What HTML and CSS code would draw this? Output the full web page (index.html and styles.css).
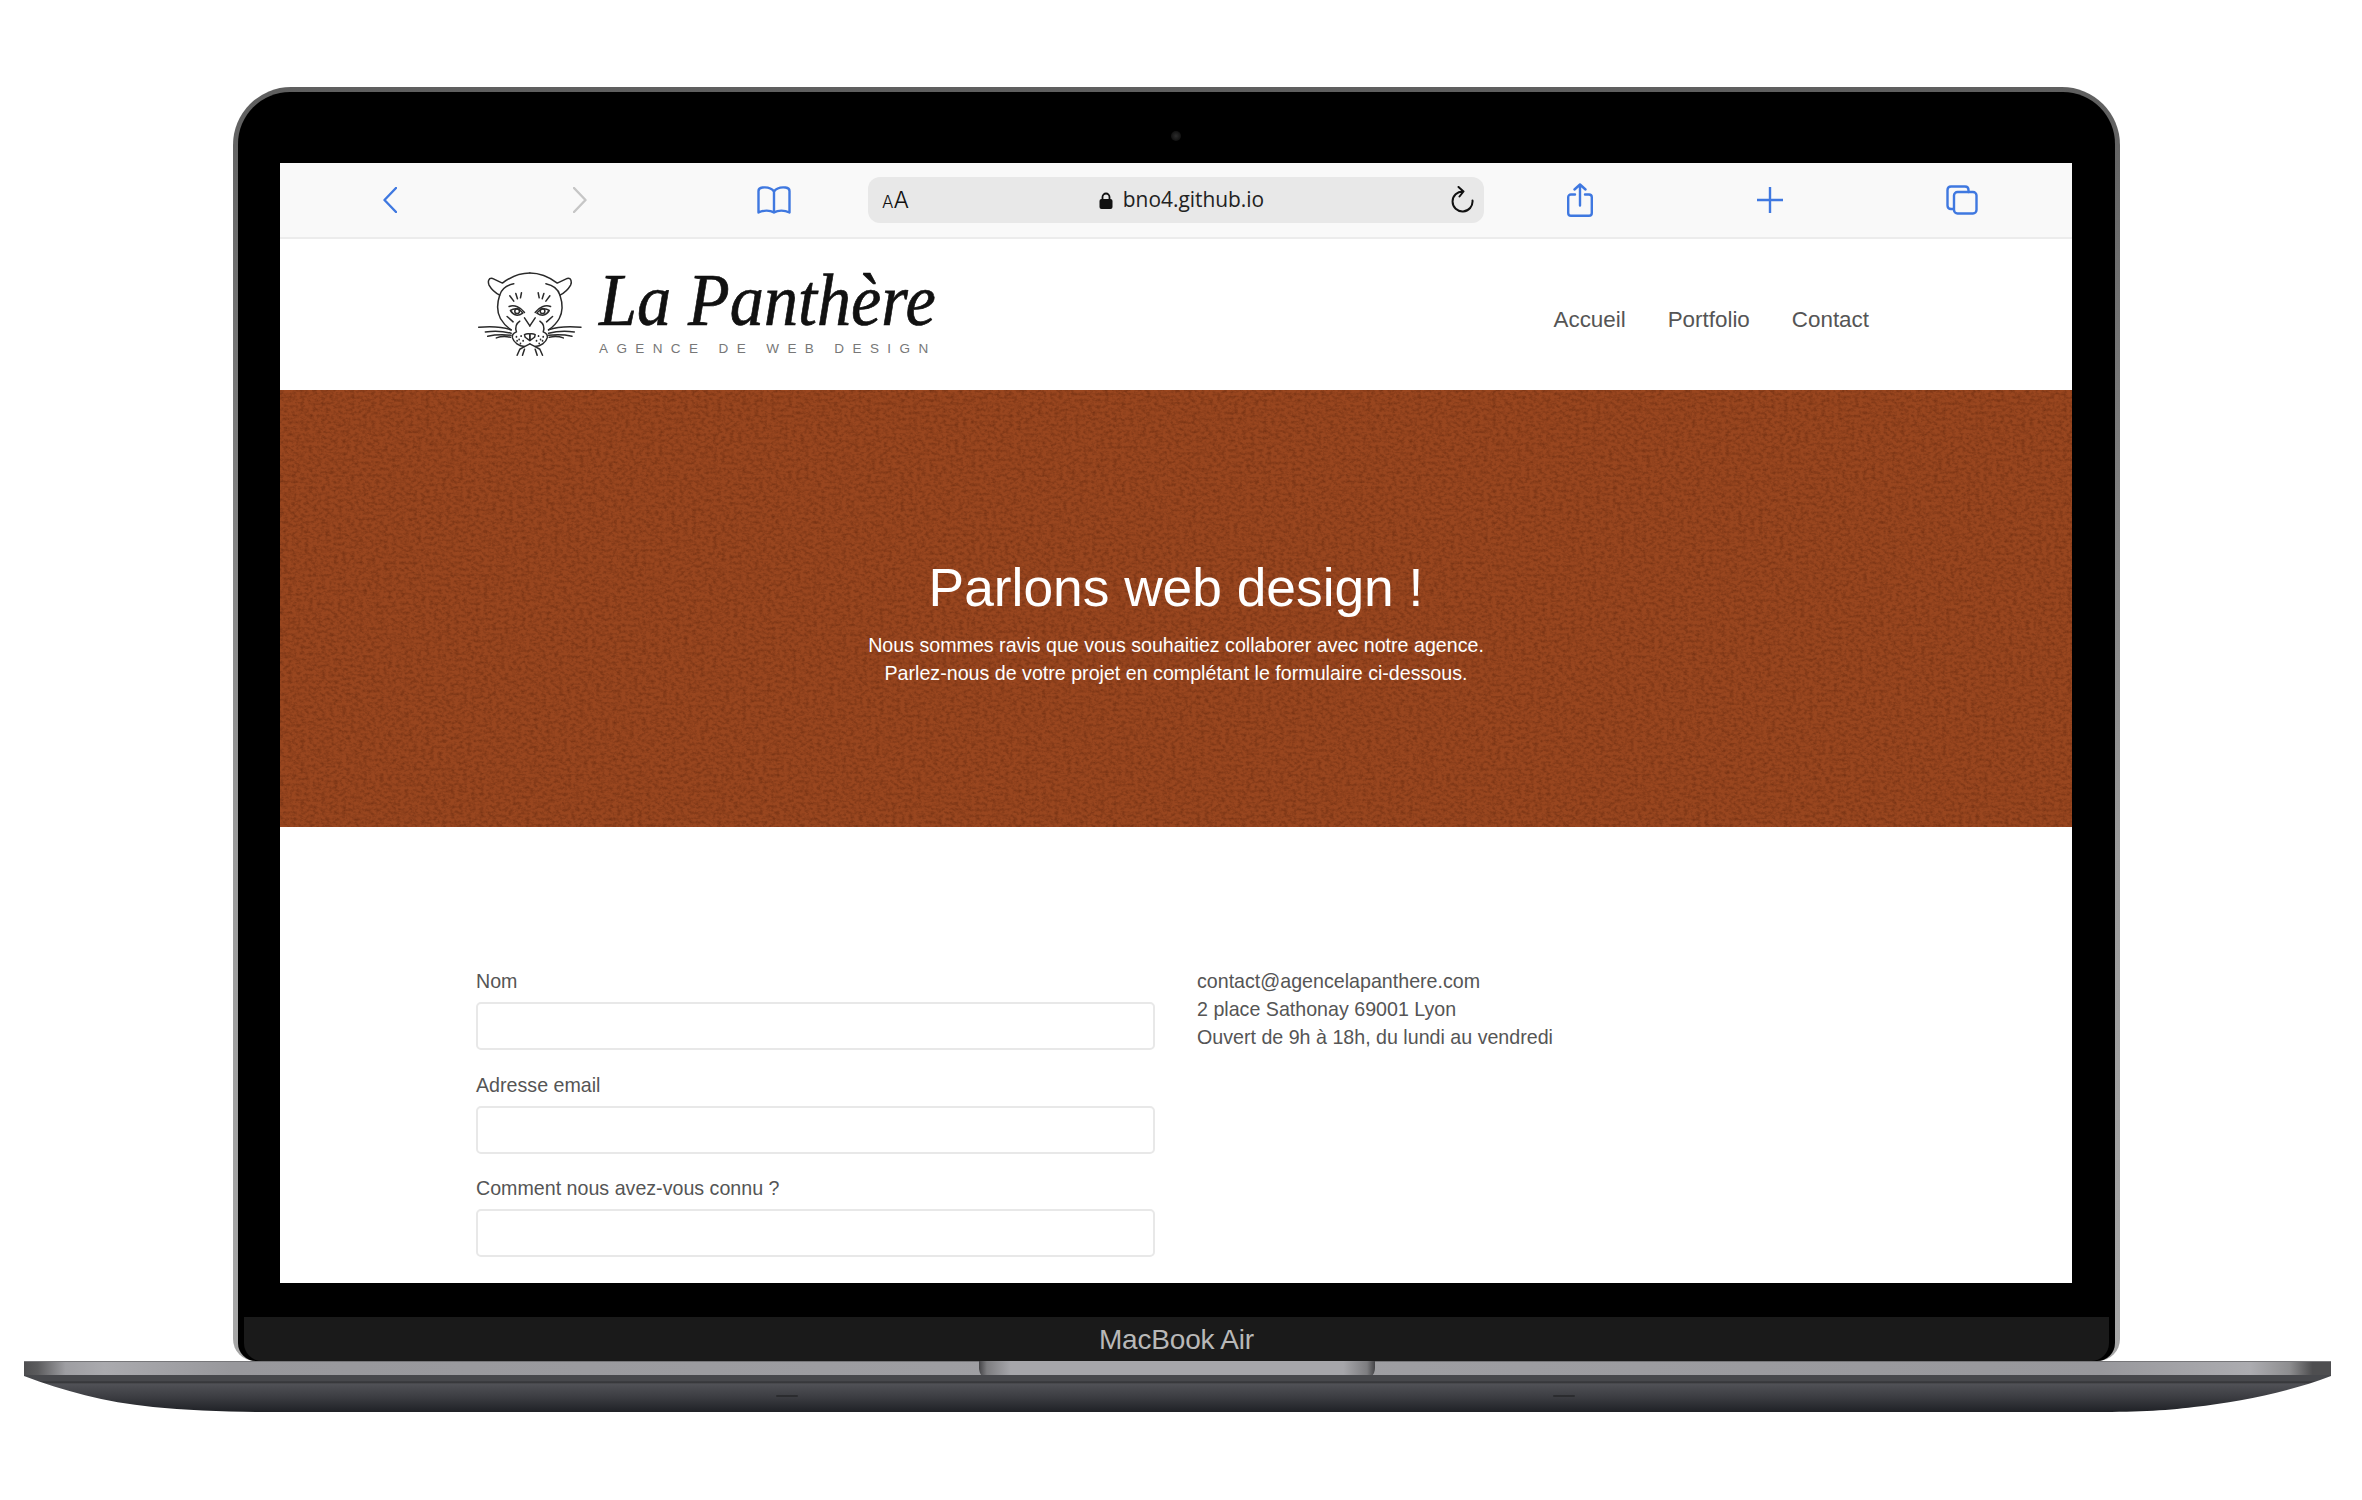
FILE: index.html
```html
<!DOCTYPE html>
<html lang="fr">
<head>
<meta charset="utf-8">
<title>La Panthère</title>
<link rel="stylesheet" href="styles.css">
</head>
<body>
<div class="stage">
  <div class="lid">
    <div class="bezel">
      <span class="camera"></span>
      <div class="screen">
        <div class="toolbar">
          <span class="tool"><svg width="14" height="26" viewBox="0 0 14 26"><path class="ic" d="M13 1 1.5 13 13 25"/></svg></span>
          <span class="tool"><svg width="14" height="26" viewBox="0 0 14 26"><path class="ic ic-off" d="M1 1 12.5 13 1 25"/></svg></span>
          <span class="tool tool-book"><svg width="34" height="28" viewBox="0 0 34 28"><path class="ic" d="M17 5.500C14.500 2 10 1 5.500 1.500 3 1.800 1.500 2.800 1.500 5V26.500C6.500 24 13 24 17 26.500 21 24 27.500 24 32.500 26.500V5C32.500 2.800 31 1.800 28.500 1.500 24 1 19.500 2 17 5.500ZM17 5.500V26.500"/></svg></span>
          <div class="urlbar">
            <span class="aa"><small>A</small>A</span>
            <span class="url">
              <svg width="14" height="17" viewBox="0 0 14 17"><path class="lock-ring" d="M3.500 8V5a3.500 3.500 0 0 1 7 0V8"/><rect x="0.500" y="7" width="13" height="10" rx="2" fill="#111"/></svg>
              <span class="url-text">bno4.github.io</span>
            </span>
            <svg width="24" height="28" viewBox="0 0 24 28"><path class="reload" d="M13 5.500A10 10 0 1 0 22.500 14.500M8.500 1 13.500 5.500 9.500 10.500"/></svg>
          </div>
          <span class="tool"><svg width="26" height="34" viewBox="0 0 26 34"><path class="ic" d="M8 11.500H4C2.300 11.500 1.200 12.600 1.200 14.300V30C1.200 31.800 2.300 32.800 4 32.800H22C23.700 32.800 24.800 31.800 24.800 30V14.300C24.800 12.600 23.700 11.500 22 11.500H18M13 22.500V1.500M7.500 6.500 13 1.500 18.500 6.500"/></svg></span>
          <span class="tool"><svg width="26" height="26" viewBox="0 0 26 26"><path class="ic" d="M13 0V26M0 13H26"/></svg></span>
          <span class="tool tool-tabs"><svg width="32" height="30" viewBox="0 0 32 30"><path class="ic" d="M7 24H5C2.800 24 1.500 22.700 1.500 20.500V5C1.500 2.800 2.800 1.500 5 1.500H19C21.200 1.500 22.500 2.800 22.500 5V7"/><rect class="ic" x="8" y="7" width="22.500" height="21.500" rx="3.500"/></svg></span>
        </div>

        <header class="site-header">
          <div class="logo">
            <svg class="panther" width="107" height="87" viewBox="50 50 320 260">
              <g id="half" class="panther-lines">
                <path d="M208 56C175 56 150 68 126 86L96 72C84 70 82 82 86 92 94 106 106 116 118 122 110 146 108 170 120 192 128 206 140 218 152 226"/>
                <path d="M118 122C124 102 140 92 160 88"/>
                <path d="M148 124 160 140M166 117 171 133M183 115 180 130"/>
                <path d="M146 156C162 150 180 158 192 174"/>
                <path d="M150 168C165 158 178 164 187 176 172 186 160 184 150 168Z"/>
                <circle cx="170" cy="170" r="7"/>
                <path d="M140 186 158 202"/>
                <path d="M192 190 208 214"/>
                <path d="M178 200C166 208 164 220 168 232 158 236 154 242 156 250 160 264 176 274 192 276L208 268"/>
                <path d="M192 240C200 236 204 238 208 238V258L194 248Z"/>
                <path d="M170 302 178 284 192 276M186 302 192 284"/>
                <path d="M55 218C90 215 125 216 152 226M75 232C105 228 130 230 152 236M82 245C105 240 130 240 152 242M108 250C122 245 135 245 150 248"/>
                <path class="dots" d="M168 246V247M176 254V255M170 258V259M182 244V245M188 258V259M180 266V267"/>
              </g>
              <use href="#half" transform="matrix(-1 0 0 1 416 0)"/>
            </svg>
            <div class="wordmark">
              <span class="brand">La Panthère</span>
              <span class="tagline">AGENCE DE WEB DESIGN</span>
            </div>
          </div>
          <nav class="nav">
            <a>Accueil</a>
            <a>Portfolio</a>
            <a>Contact</a>
          </nav>
        </header>

        <section class="hero">
          <svg class="grain" width="100%" height="100%">
            <filter id="paper" x="0" y="0" width="100%" height="100%" color-interpolation-filters="sRGB">
              <feTurbulence type="fractalNoise" baseFrequency="0.24 0.32" numOctaves="4" seed="23"/>
              <feColorMatrix type="matrix" values="0 0 0 0 0.33  0 0 0 0 0.12  0 0 0 0 0.03  0.9 0 0 0 -0.34"/>
            </filter>
            <rect width="100%" height="100%" filter="url(#paper)"/>
          </svg>
          <h1 class="hero-title">Parlons web design !</h1>
          <p class="hero-text">Nous sommes ravis que vous souhaitiez collaborer avec notre agence.<br>Parlez-nous de votre projet en complétant le formulaire ci-dessous.</p>
        </section>

        <section class="contact">
          <form class="form">
            <label class="field"><span>Nom</span><input type="text"></label>
            <label class="field"><span>Adresse email</span><input type="text"></label>
            <label class="field"><span>Comment nous avez-vous connu ?</span><input type="text"></label>
          </form>
          <address class="info">
            contact@agencelapanthere.com<br>
            2 place Sathonay 69001 Lyon<br>
            Ouvert de 9h à 18h, du lundi au vendredi
          </address>
        </section>
      </div>
      <div class="hinge">MacBook Air</div>
    </div>
  </div>
  <div class="base">
    <div class="base-top"><span class="notch"></span></div>
    <div class="base-bottom">
      <span class="foot foot-left"></span>
      <span class="foot foot-right"></span>
    </div>
  </div>
</div>
</body>
</html>
```

FILE: styles.css
```css
* { box-sizing: border-box; }

html, body {
  margin: 0;
  background: #fff;
}

body {
  font-family: "Liberation Sans", Arial, sans-serif;
  color: #555;
}

.stage {
  width: 2362px;
  height: 1500px;
  padding-top: 87px;
  overflow: hidden;
}

/* Laptop lid */
.lid {
  width: 1887px;
  height: 1274px;
  margin-left: 233px;
  padding: 5px 5px 0;
  border-radius: 58px 58px 22px 22px;
  background: linear-gradient(to bottom, #5f5f5f 0, #6c6c6c 12%, #9a9a9a 60%, #a6a6a6 100%);
}

.bezel {
  position: relative;
  height: 100%;
  display: flex;
  flex-direction: column;
  align-items: flex-start;
  padding: 71px 0 0 42px;
  background: #000;
  border-radius: 52px 52px 18px 18px;
}

.camera {
  position: absolute;
  top: 39px;
  left: 933px;
  width: 10px;
  height: 10px;
  border-radius: 50%;
  background: radial-gradient(circle, #2c2c2c 0, #151515 60%, #0b0b0b 100%);
}

.screen {
  width: 1792px;
  height: 1120px;
  background: #fff;
  overflow: hidden;
}

/* Browser toolbar */
.toolbar {
  display: flex;
  align-items: center;
  height: 76px;
  padding-left: 15px;
  background: #f9f9f9;
  border-bottom: 2px solid #ececec;
}

.tool {
  flex: 0 0 190px;
  display: flex;
  justify-content: center;
  align-items: center;
}

.tool-book { padding-left: 1px; margin-left: 3px; }
.tool-tabs { padding-left: 4px; }

.ic {
  fill: none;
  stroke: #3f78e0;
  stroke-width: 2.400;
  stroke-linecap: round;
  stroke-linejoin: round;
}

.ic-off { stroke: #c6c6c6; }

.urlbar {
  flex: 0 0 616px;
  height: 46px;
  display: flex;
  align-items: center;
  padding: 0 10px 0 14px;
  background: #e8e8e8;
  border-radius: 12px;
  margin-right: 1px;
}

.aa {
  width: 28px;
  font-family: Inter, sans-serif;
  font-weight: 300;
  font-size: 23px;
  color: #111;
  white-space: nowrap;
}

.aa small { font-size: 17px; }

.url {
  flex: 1;
  display: flex;
  justify-content: center;
  align-items: center;
  gap: 10px;
  padding-left: 3px;
}

.url-text {
  position: relative;
  top: -1px;
  font-family: "Open Sans", sans-serif;
  font-size: 20.900px;
  color: #222;
}

.lock-ring {
  fill: none;
  stroke: #111;
  stroke-width: 1.800;
}

.reload {
  fill: none;
  stroke: #111;
  stroke-width: 2;
  stroke-linecap: round;
  stroke-linejoin: round;
}

/* Site header */
.site-header {
  height: 151px;
  display: flex;
  justify-content: space-between;
  align-items: center;
  padding: 0 203px 0 197px;
}

.logo {
  display: flex;
  align-items: center;
  gap: 15px;
}

.panther-lines,
.panther use {
  fill: none;
  stroke: #2a2a2a;
  stroke-width: 4.500;
  stroke-linecap: round;
  stroke-linejoin: round;
}

.dots { stroke-width: 5; }

.wordmark {
  display: flex;
  flex-direction: column;
  width: 334px;
}

.brand {
  margin-top: 1px;
  font-family: "Liberation Serif", serif;
  font-style: italic;
  font-size: 74px;
  line-height: 52px;
  color: #111;
  white-space: nowrap;
  -webkit-text-stroke: 0.700px #111;
  transform: scaleX(0.922);
  transform-origin: left center;
}

.tagline {
  margin-top: 15px;
  font-size: 13.500px;
  line-height: 16px;
  letter-spacing: 8.400px;
  color: #777;
  white-space: nowrap;
}

.nav {
  display: flex;
  gap: 42px;
  margin-top: 11px;
  font-size: 22.400px;
  color: #555;
}

/* Hero */
.hero {
  position: relative;
  height: 437px;
  padding-top: 167px;
  text-align: center;
  background: #99461f;
  color: #fff;
}

.grain {
  position: absolute;
  inset: 0;
}

.hero-title,
.hero-text {
  position: relative;
  margin: 0;
}

.hero-title {
  font-size: 53.300px;
  font-weight: 400;
  line-height: 62px;
}

.hero-text {
  margin-top: 12px;
  font-size: 19.650px;
  line-height: 28px;
}

/* Contact */
.contact {
  display: flex;
  gap: 42px;
  padding: 140px 0 0 196px;
  font-size: 19.650px;
  line-height: 28px;
}

.form {
  width: 679px;
  display: flex;
  flex-direction: column;
  gap: 20.500px;
}

.field {
  display: flex;
  flex-direction: column;
  gap: 7px;
}

.field input {
  height: 48px;
  border: 2px solid #e8e8e8;
  border-radius: 5px;
  background: #fff;
}

.info {
  font-style: normal;
  white-space: nowrap;
}

/* Hinge strip */
.hinge {
  width: 1865px;
  height: 44px;
  margin: 34px 0 0 -36px;
  text-align: center;
  font-size: 28px;
  line-height: 46px;
  letter-spacing: -0.200px;
  color: #b8b8b8;
  background: #1a1a1a;
  border-radius: 0 0 18px 18px;
}

/* Base */
.base {
  width: 2307px;
  margin-left: 24px;
}

.base-top {
  position: relative;
  height: 14px;
  background: linear-gradient(to right, #4e4e50 0, #5c5c5e 0.600%, #9e9ea2 1.800%, #aaaaae 3.500%, #98989c 9%, #a0a0a4 50%, #98989c 90%, #acacb0 96.500%, #8e8e90 98.200%, #4e4e50 99.200%, #4e4e50 100%);
  border-top: 1px solid #77777a;
}

.notch {
  position: absolute;
  top: -1px;
  left: 955px;
  width: 396px;
  height: 19px;
  border-radius: 0 0 12px 12px;
  background: linear-gradient(to right, #444447 0, #7d7d80 2%, #a6a6aa 8%, #a6a6aa 92%, #7d7d80 98%, #444447 100%);
}

.base-bottom {
  position: relative;
  height: 37px;
  clip-path: path("M0 0V1C40 16 80 27 129 32 160 35 200 37 236 37H2063C2110 37 2140 36 2170 32 2215 27 2265 17 2307 1V0Z");
  background: linear-gradient(to bottom, #47484c 0, #47484c 6px, #2f3033 7px, #505156 9px, #3c3d42 22px, #1f2126 37px);
}

.foot {
  position: absolute;
  top: 20px;
  width: 22px;
  height: 2px;
  border-radius: 2px;
  background: #2b2c2f;
}

.foot-left { left: 752px; }
.foot-right { left: 1529px; }
```
